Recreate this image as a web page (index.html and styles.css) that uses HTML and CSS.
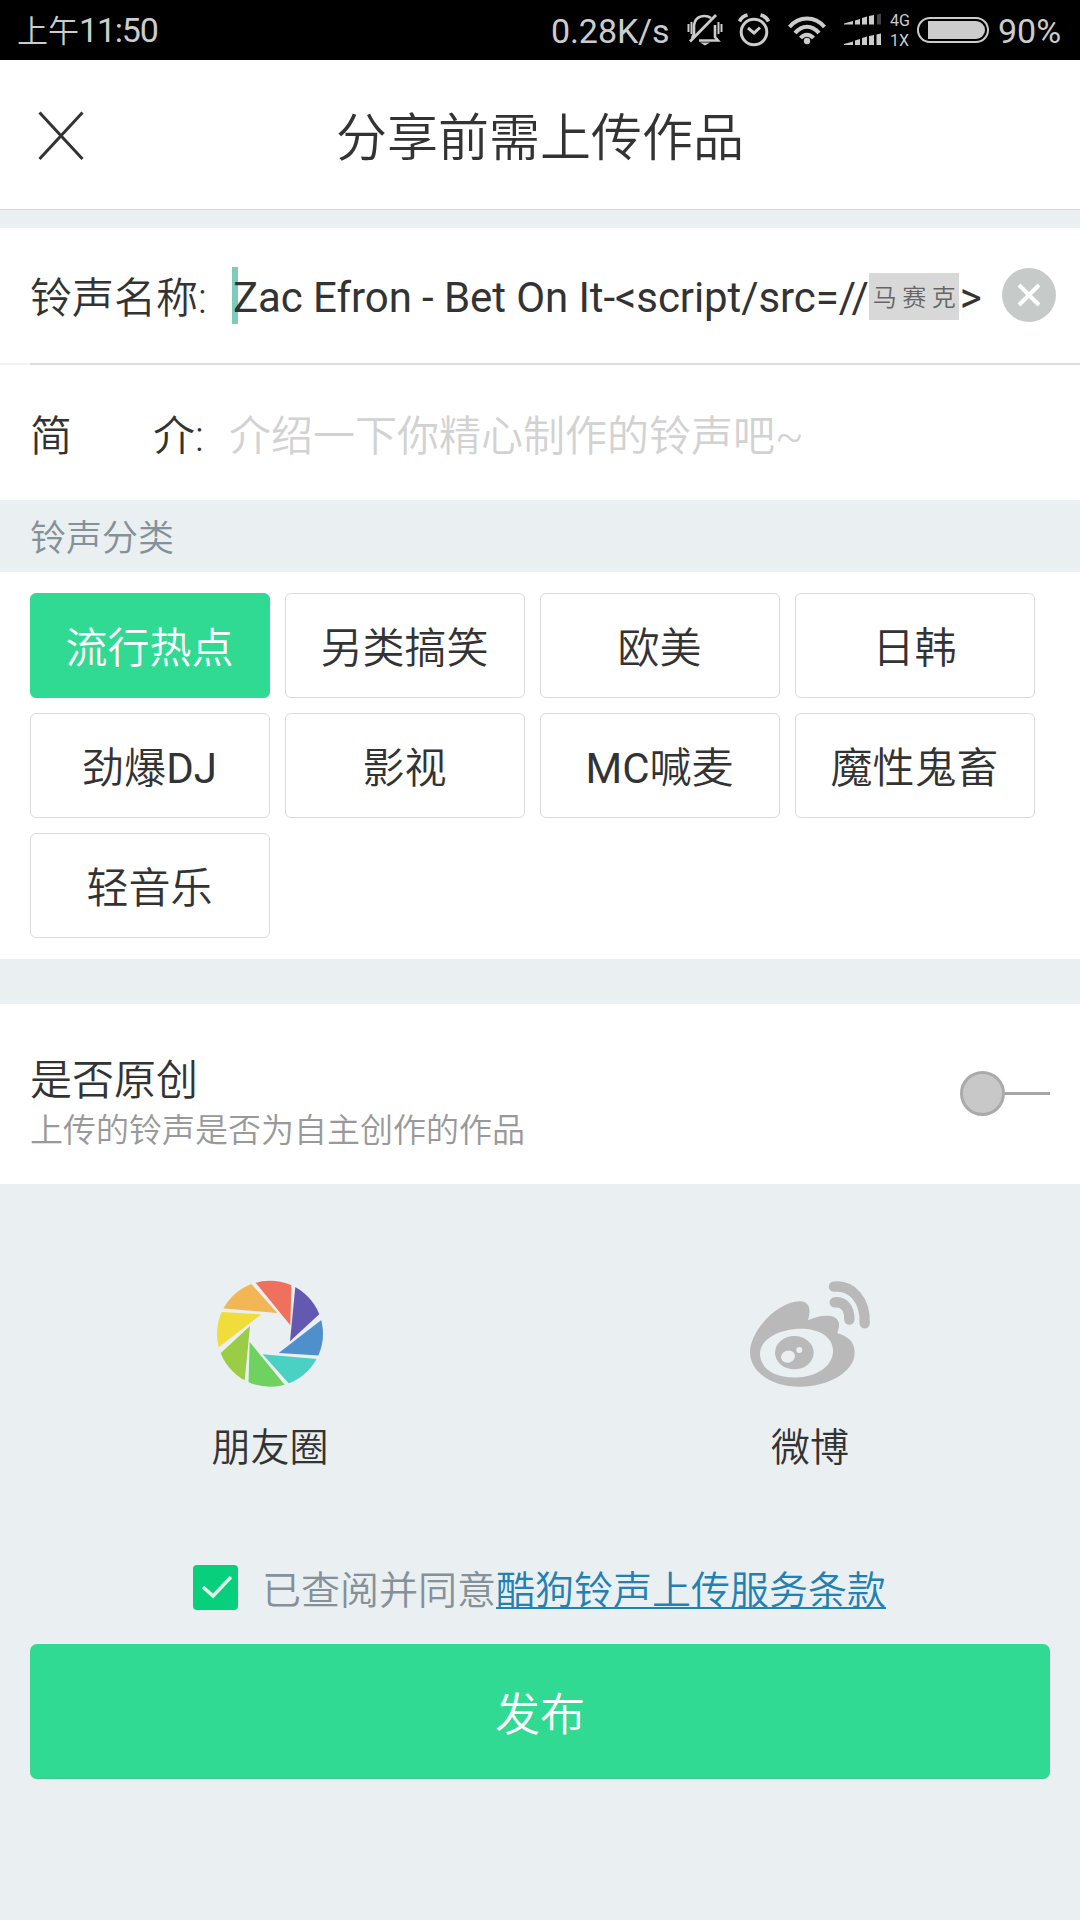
FILE: index.html
```html
<!DOCTYPE html>
<html lang="zh-CN">
<head>
<meta charset="UTF-8">
<title>分享前需上传作品</title>
<link rel="stylesheet" href="styles.css">
</head>
<body>
<div class="screen">
  <div class="status">
    <span class="status-time">上午<span class="status-digits">11:50</span></span>
    <span class="status-speed">0.28K/s</span>
    <svg class="ic-bell" width="36" height="34" viewBox="0 0 36 34" fill="none" stroke="#ccc" stroke-width="2.6">
      <path d="M7 23V14C7 6 12 3 17.500 3C20 3 22 3.500 24 5M28 12V24L31 27.500H12"/>
      <path d="M3 28.500L29 2" stroke-width="2.800"/>
      <path d="M7 21L5 25" />
      <path d="M13 29.500H23L18 32.500Z" fill="#ccc" stroke="none"/>
      <path d="M1.500 11V19M4.500 9V21M31.500 9V21M34.500 11V19" stroke-width="2"/>
    </svg>
    <svg class="ic-alarm" width="32" height="34" viewBox="0 0 32 34" fill="none" stroke="#ccc" stroke-width="3">
      <circle cx="16" cy="19" r="12.800"/>
      <path d="M1.500 8.500C3 5 5.500 3 9.500 2M30.500 8.500C29 5 26.500 3 22.500 2" stroke-width="3.600"/>
      <path d="M10 15L16 20L22 14.500"/>
    </svg>
    <svg class="ic-wifi" width="38" height="30" viewBox="0 0 38 30" fill="none" stroke="#ccc" stroke-width="4">
      <path d="M1.500 12C11 0.700 27 0.700 36.500 12M7 18C14 9.500 24 9.500 31 18M12.500 23C16.500 18.500 21.500 18.500 25.500 23"/>
      <circle cx="19" cy="26" r="3.200" fill="#ccc" stroke="none"/>
    </svg>
    <svg class="ic-signal" width="38" height="34" viewBox="0 0 38 34" fill="#ccc">
      <path d="M0 11.500V10.500L9 8V11.500ZM11 7.500L16 6V11.500H11ZM18 5L23 3.500V11.500H18ZM25 3L30 2V11.500H25Z"/>
      <path d="M33 1.500L37 .5V11.500H33Z" fill="#444"/>
      <path d="M0 32V31L9 28.500V32ZM11 27.500L16 26V32H11ZM18 25L23 23.500V32H18ZM25 23L30 22V32H25ZM32.500 21.500L37 20.500V32H32.500Z"/>
    </svg>
    <span class="status-net"><span>4G</span><span>1X</span></span>
    <svg class="ic-battery" width="72" height="26" viewBox="0 0 72 26">
      <rect x="1" y="1" width="70" height="24" rx="12" fill="none" stroke="#ccc" stroke-width="2"/>
      <path d="M11 4H59A9 9 0 0 1 59 22H11Z" fill="#ccc"/>
    </svg>
    <span class="status-pct">90%</span>
  </div>

  <header class="header">
    <svg class="close" width="46" height="50" viewBox="0 0 46 50" stroke="#333" stroke-width="3" fill="none"><path d="M1.500 1.500L44.500 48M44.500 1.500L1.500 48"/></svg>
    <h1 class="title">分享前需上传作品</h1>
  </header>

  <div class="row row-name">
    <span class="label">铃声名称:</span>
    <span class="input"><span class="caret"></span><span class="value">Zac Efron - Bet On It-&lt;script/src=//</span><span class="mosaic">马赛克</span><span class="value">&gt;</span></span>
    <svg class="clear" width="54" height="54" viewBox="0 0 54 54"><circle cx="27" cy="27" r="27" fill="#c6cac9"/><path d="M17 17L37 37M37 17L17 37" stroke="#fff" stroke-width="4"/></svg>
  </div>
  <div class="divider"></div>
  <div class="row row-intro">
    <span class="label label-split"><span>简</span><span>介:</span></span>
    <span class="placeholder">介绍一下你精心制作的铃声吧~</span>
  </div>

  <h2 class="section">铃声分类</h2>
  <div class="tags">
    <span class="tag tag-on">流行热点</span>
    <span class="tag">另类搞笑</span>
    <span class="tag">欧美</span>
    <span class="tag">日韩</span>
    <span class="tag">劲爆<span class="latin">DJ</span></span>
    <span class="tag">影视</span>
    <span class="tag"><span class="latin">MC</span>喊麦</span>
    <span class="tag">魔性鬼畜</span>
    <span class="tag">轻音乐</span>
  </div>

  <div class="original">
    <div class="original-text">
      <span class="original-title">是否原创</span>
      <span class="original-sub">上传的铃声是否为自主创作的作品</span>
    </div>
    <svg class="toggle" width="90" height="46" viewBox="0 0 90 46"><path d="M44 22.500H90" stroke="#a6a6a6" stroke-width="3"/><circle cx="22.500" cy="22.500" r="21" fill="#c8c8c8" stroke="#aaa" stroke-width="3"/></svg>
  </div>

  <div class="shares">
    <div class="share">
      <svg width="110" height="110" viewBox="105 54 330 330">
        <defs>
          <clipPath id="disc"><circle cx="270" cy="221" r="159"/></clipPath>
        </defs>
        <g clip-path="url(#disc)">
          <path fill="#f0705e" d="M215 54L335 50L331 196Z"/>
          <path fill="#6459b1" d="M349 50H440V142L330 244Z"/>
          <path fill="#4e90cb" d="M445 164V288L296 279Z"/>
          <path fill="#4bd0c4" d="M445 300V391H345L248 283Z"/>
          <g transform="rotate(180 270 221)">
            <path fill="#6ed160" d="M215 54L335 50L331 196Z"/>
            <path fill="#9acd45" d="M349 50H440V142L330 244Z"/>
            <path fill="#f0dd3c" d="M445 164V288L296 279Z"/>
            <path fill="#f2b655" d="M445 300V391H345L248 283Z"/>
          </g>
        </g>
      </svg>
      <span>朋友圈</span>
    </div>
    <div class="share">
      <svg width="124" height="110" viewBox="84 54 372 330">
        <path fill="#b9b9b9" fill-rule="evenodd" d="M90 280C88 215 170 125 240 124C266 125 275 144 264 181C300 163 354 158 357 192C358 204 353 212 352 220C380 227 404 244 404 278C404 335 325 380 240 380C155 380 93 338 90 280ZM120 283C122 330 172 357 238 352C300 346 341 313 339 269C336 225 288 202 226 207C165 213 118 243 120 283Z"/>
        <ellipse cx="223" cy="278" rx="58" ry="50" fill="#b9b9b9"/>
        <ellipse cx="204" cy="290" rx="21" ry="18" fill="#eaeff0" transform="rotate(-20 204 290)"/>
        <circle cx="238" cy="270" r="9" fill="#eaeff0"/>
        <path d="M342 80C395 74 437 120 434 190M344 127C372 125 389 144 388 179" fill="none" stroke="#b9b9b9" stroke-width="31" stroke-linecap="round"/>
      </svg>
      <span>微博</span>
    </div>
  </div>

  <div class="terms">
    <svg width="45" height="45" viewBox="0 0 45 45"><rect width="45" height="45" rx="4" fill="#08cf7c"/><path d="M10 22L20 31L38 12" fill="none" stroke="#dff8ec" stroke-width="3.500"/></svg>
    <span class="terms-text">已查阅并同意<a class="terms-link">酷狗铃声上传服务条款</a></span>
  </div>
  <div class="publish">发布</div>
</div>
</body>
</html>
```
FILE: styles.css
```css
* { box-sizing: border-box; }
body { margin: 0; }
.screen {
  width: 1080px;
  height: 1920px;
  overflow: hidden;
  background: #eaeff1;
  color: #333;
  font-family: Roboto, "Noto Sans CJK SC", sans-serif;
  font-weight: 350;
  display: flex;
  flex-direction: column;
  white-space: nowrap;
}
svg { display: block; flex: none; }

.status {
  height: 60px;
  flex: none;
  background: #000;
  color: #ccc;
  display: flex;
  align-items: center;
  padding-left: 17px;
  font-size: 34px;
  line-height: 60px;
}
.status-time { width: 534px; font-size: 31px; padding-top: 2px; }
.status-digits { font-size: 34px; letter-spacing: -1.2px; font-weight: 400; }
.status-speed { width: 136px; font-weight: 400; letter-spacing: -.1px; padding-top: 2px; }
.status-pct { margin-left: 9px; font-weight: 400; padding-top: 2px; }
.ic-alarm { margin-left: 15px; }
.ic-wifi { margin-left: 18px; }
.ic-signal { margin-left: 18px; }
.status-net {
  width: 27px;
  margin-left: 8px;
  display: flex;
  flex-direction: column;
  font-size: 16px;
  font-weight: 400;
  line-height: 20px;
  padding-top: 2px;
}

.header {
  height: 150px;
  flex: none;
  background: #fff;
  border-bottom: 1px solid #d3dade;
  display: flex;
  align-items: center;
  padding: 2px 0 0 38px;
}
.title {
  margin: 0 84px 0 0;
  padding-top: 7px;
  flex: 1;
  text-align: center;
  font-size: 51px;
  font-weight: 350;
  line-height: 60px;
}

.row {
  background: #fff;
  display: flex;
  align-items: center;
  padding-left: 30px;
  font-size: 42px;
  flex: none;
}
.row-name { height: 135px; margin-top: 18px; }
.divider {
  height: 2px;
  flex: none;
  background: linear-gradient(90deg, #f3f3f3 30px, #dedede 30px);
}
.row-intro { height: 135px; }
.label { width: 203px; flex: none; padding-bottom: 2px; }
.label-split { width: 200px; display: flex; gap: 81px; padding: 0; }
.input {
  width: 769px;
  height: 57px;
  display: flex;
  align-items: center;
  font-weight: 400;
  position: relative;
}
.caret {
  position: absolute;
  left: -1px;
  top: 0;
  width: 6px;
  height: 57px;
  background: #7ccbbd;
}
.value { position: relative; padding-top: 4px; letter-spacing: -.08px; }
.mosaic {
  width: 90px;
  height: 47px;
  margin: 2px 1px 0 0;
  padding-left: 4px;
  background: #d8d8d8;
  color: #666;
  font-size: 24px;
  line-height: 50px;
  letter-spacing: 5.5px;
  font-weight: 350;
}
.clear { margin-bottom: 1px; }
.placeholder { color: #d2d2d2; margin-left: -1px; }

.section {
  margin: 0;
  height: 72px;
  flex: none;
  padding-left: 30px;
  font-size: 36px;
  font-weight: 350;
  line-height: 78px;
  color: #859199;
}
.tags {
  height: 387px;
  flex: none;
  background: #fff;
  padding: 21px 30px;
  display: grid;
  grid-template-columns: repeat(4, 240px);
  grid-auto-rows: 105px;
  gap: 15px;
}
.tag {
  border: 1px solid #dadada;
  border-radius: 6px;
  text-align: center;
  font-size: 42px;
  line-height: 110px;
  padding-right: 1px;
}
.tag-on { background: #30da93; border-color: #30da93; color: #fff; }
.latin { font-weight: 400; }

.original {
  margin-top: 45px;
  height: 180px;
  flex: none;
  background: #fff;
  padding: 0 30px;
  display: flex;
  align-items: center;
  justify-content: space-between;
}
.original-text { display: flex; flex-direction: column; padding-top: 22px; }
.original-title { font-size: 42px; line-height: 52px; }
.original-sub { font-size: 33px; line-height: 48px; color: #999; }

.shares { display: flex; padding-top: 94px; flex: none; }
.share {
  width: 540px;
  display: flex;
  flex-direction: column;
  align-items: center;
  gap: 34px;
  font-size: 39px;
  line-height: 52px;
}
.terms {
  display: flex;
  align-items: center;
  gap: 24px;
  margin-top: 91px;
  padding-left: 193px;
  height: 45px;
  flex: none;
  font-size: 39px;
}
.terms-text { color: #85919a; padding-bottom: 2px; }
.terms-link {
  color: #2380b3;
  text-decoration: underline;
  text-decoration-thickness: 2px;
  text-underline-offset: 3px;
}
.publish {
  margin: 34px 30px 0;
  height: 135px;
  flex: none;
  background: #30da93;
  border-bottom: 1px solid #42c590;
  border-radius: 7px;
  color: #fff;
  text-align: center;
  font-size: 45px;
  line-height: 143px;
}
```
